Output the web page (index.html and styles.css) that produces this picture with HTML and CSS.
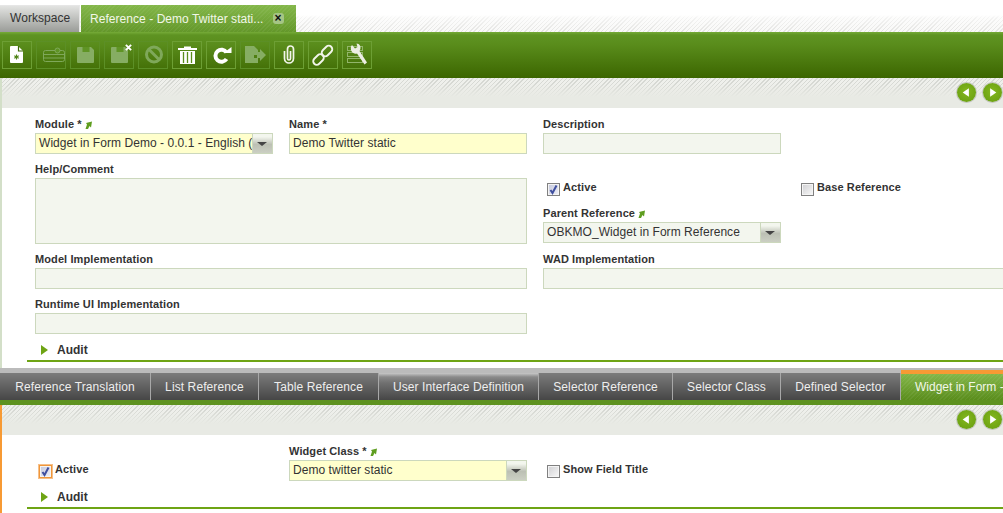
FILE: index.html
```html
<!DOCTYPE html>
<html lang="en">
<head>
<meta charset="utf-8">
<title>Reference - Demo Twitter static</title>
<link rel="stylesheet" href="styles.css">
</head>
<body>
<div class="app">
  <div class="top-tabs">
    <div class="top-tab workspace">Workspace</div>
    <div class="top-tab current">Reference - Demo Twitter stati...<span class="close">×</span></div>
  </div>
  <div class="toolbar">
    <div class="tbtn"><svg viewBox="0 0 30 28"><path d="M9 5h7l5 5v11a1 1 0 0 1-1 1H9a1 1 0 0 1-1-1V6a1 1 0 0 1 1-1z" fill="#fff"/><path d="M16.500 5v5h4.500" fill="none" stroke="#3f6a08" stroke-width="1.200"/><path d="M14.500 13.500v5M12.300 14.700l4.400 2.600M16.700 14.700l-4.400 2.600" stroke="#4f8416" stroke-width="1.100"/></svg></div>
    <div class="tbtn off"><svg viewBox="0 0 30 28"><rect x="7.500" y="9.500" width="21" height="11" rx="2" fill="none" stroke="#7fa85a"/><path d="M8 13.500h20M8 17h20" stroke="#7fa85a"/><circle cx="21.500" cy="9.500" r="2.500" fill="#5f9425" stroke="#7fa85a"/></svg></div>
    <div class="tbtn off"><svg viewBox="0 0 30 28"><path d="M8 6h13l3 3v12a1 1 0 0 1-1 1H8a1 1 0 0 1-1-1V7a1 1 0 0 1 1-1z" fill="#86ad63"/><rect x="12.500" y="6" width="7" height="5" fill="#5f9425"/></svg></div>
    <div class="tbtn off save-close"><svg viewBox="0 0 30 28"><path d="M8 6h13l3 3v12a1 1 0 0 1-1 1H8a1 1 0 0 1-1-1V7a1 1 0 0 1 1-1z" fill="#86ad63"/><rect x="12.500" y="6" width="7" height="5" fill="#5f9425"/></svg><svg class="mark" viewBox="0 0 8 8"><path d="M1 1l6 6M7 1L1 7" stroke="#fff" stroke-width="2.200"/></svg></div>
    <div class="tbtn off"><svg viewBox="0 0 30 28"><circle cx="16" cy="13.500" r="7.500" fill="none" stroke="#7fa85a" stroke-width="3"/><path d="M11 8.500l10 10" stroke="#7fa85a" stroke-width="3"/></svg></div>
    <div class="tbtn"><svg viewBox="0 0 30 28"><path d="M6 7h19v2H6zM12 5.500h7V7h-7z" fill="#fff"/><path d="M8 10h15v13H8z" fill="#fff"/><path d="M11.500 11v11M15.500 11v11M19.500 11v11" stroke="#5a8d1c" stroke-width="1.300"/></svg></div>
    <div class="tbtn"><svg viewBox="0 0 30 28"><path d="M20.500 11.500A6 6 0 1 0 20.500 18" fill="none" stroke="#fff" stroke-width="4"/><path d="M17.500 12h8V6z" fill="#fff"/></svg></div>
    <div class="tbtn off"><svg viewBox="0 0 30 28"><path d="M5 5h9l4 4v5h-4v3h4v5H5z" fill="#86ad63"/><path d="M17 11h3V8l6 6-6 6v-3h-3z" fill="#86ad63"/></svg></div>
    <div class="tbtn"><svg viewBox="0 0 30 28"><path d="M10.500 10v7.500a4.500 4.500 0 0 0 9 0V8a3 3 0 0 0-6 0v9.500a1.200 1.200 0 0 0 3 0V10" fill="none" stroke="#f2f5ea" stroke-width="1.700"/></svg></div>
    <div class="tbtn"><svg viewBox="0 0 30 28"><g fill="none" stroke="#f2f5ea" stroke-width="1.900"><rect x="4.500" y="15" width="12" height="7" rx="3.500" transform="rotate(-45 10.500 18.500)"/><rect x="13" y="6.500" width="12" height="7" rx="3.500" transform="rotate(-45 19 10)"/></g></svg></div>
    <div class="tbtn"><svg viewBox="0 0 30 28"><g fill="none" stroke="#92b56b"><rect x="5.500" y="5.500" width="15" height="4"/><rect x="5.500" y="11.500" width="15" height="4"/><rect x="5.500" y="17.500" width="15" height="4"/></g><path d="M10 4l3 3.500 2.500-1.500-1-3.500C17.500 2.500 20 6 17.500 10L25 21.500 22.500 23.500 15 12.500C11 13.500 8 10 9 5.500z" fill="#eceee4"/></svg></div>
  </div>
  <div class="window main-window">
    <div class="statusbar">
      <span class="nav"><svg viewBox="0 0 20 20"><path d="M12.500 5.500v9L6 10z" fill="#fff"/></svg></span>
      <span class="nav"><svg viewBox="0 0 20 20"><path d="M7.500 5.500v9L14 10z" fill="#fff"/></svg></span>
    </div>
    <div class="form">
      <div class="field"><label class="lbl">Module *<svg class="arrow" viewBox="0 0 7 8"><path d="M.5 8 2 3.500 1 2 7 .5 6 6.500 4.500 5 3 8z" fill="#5f9e20"/></svg></label><div class="input req combo"><span class="val">Widget in Form Demo - 0.0.1 - English (</span><span class="drop"></span></div></div>
      <div class="field"><label class="lbl">Name *</label><div class="input req"><span class="val">Demo Twitter static</span></div></div>
      <div class="field"><label class="lbl">Description</label><div class="input"></div></div>
      <div class="field"></div>
      <div class="field span2 tall"><label class="lbl">Help/Comment</label><div class="input area"></div></div>
      <div class="check-cell"><span class="cb on"><svg viewBox="0 0 11 11"><path d="M2.500 6l2 3L8.500 1.500" fill="none" stroke="#3f4f9f" stroke-width="2"/></svg></span><span class="lbl">Active</span></div>
      <div class="check-cell"><span class="cb"></span><span class="lbl">Base Reference</span></div>
      <div class="field parent"><label class="lbl">Parent Reference<svg class="arrow" viewBox="0 0 7 8"><path d="M.5 8 2 3.500 1 2 7 .5 6 6.500 4.500 5 3 8z" fill="#5f9e20"/></svg></label><div class="input combo"><span class="val">OBKMO_Widget in Form Reference</span><span class="drop"></span></div></div>
      <div class="field span2"><label class="lbl">Model Implementation</label><div class="input"></div></div>
      <div class="field span2"><label class="lbl">WAD Implementation</label><div class="input"></div></div>
      <div class="field span2"><label class="lbl">Runtime UI Implementation</label><div class="input"></div></div>
    </div>
    <div class="audit"><span class="tri"></span>Audit</div>
  </div>
  <div class="tabbar">
    <div class="tab">Reference Translation</div>
    <div class="tab">List Reference</div>
    <div class="tab">Table Reference</div>
    <div class="tab hover">User Interface Definition</div>
    <div class="tab">Selector Reference</div>
    <div class="tab">Selector Class</div>
    <div class="tab">Defined Selector</div>
    <div class="tab active">Widget in Form -</div>
  </div>
  <div class="window child-window">
    <div class="statusbar">
      <span class="nav"><svg viewBox="0 0 20 20"><path d="M12.500 5.500v9L6 10z" fill="#fff"/></svg></span>
      <span class="nav"><svg viewBox="0 0 20 20"><path d="M7.500 5.500v9L14 10z" fill="#fff"/></svg></span>
    </div>
    <div class="form">
      <div class="check-cell"><span class="cb on focus"><svg viewBox="0 0 11 11"><path d="M2.500 6l2 3L8.500 1.500" fill="none" stroke="#3f4f9f" stroke-width="2"/></svg></span><span class="lbl">Active</span></div>
      <div class="field"><label class="lbl">Widget Class *<svg class="arrow" viewBox="0 0 7 8"><path d="M.5 8 2 3.500 1 2 7 .5 6 6.500 4.500 5 3 8z" fill="#5f9e20"/></svg></label><div class="input req combo"><span class="val">Demo twitter static</span><span class="drop"></span></div></div>
      <div class="check-cell"><span class="cb"></span><span class="lbl">Show Field Title</span></div>
    </div>
    <div class="audit"><span class="tri"></span>Audit</div>
  </div>
</div>
</body>
</html>
```
FILE: styles.css
```css
* { box-sizing: border-box; }
html, body { margin: 0; padding: 0; background: #fff; overflow: hidden; }
body { font-family: "Liberation Sans", Arial, sans-serif; color: #333; }
.app { width: 1003px; height: 513px; overflow: hidden; }

.top-tabs {
  display: flex;
  height: 32px;
  padding-top: 5px;
  gap: 1px;
  background:
    linear-gradient(to bottom, #fff 15px, rgba(255,255,255,.6) 18px, rgba(255,255,255,.1) 32px),
    repeating-linear-gradient(135deg, #e2e2e0 0 1px, #f8f8f7 1px 3px);
}
.top-tab { height: 27px; line-height: 26px; font-size: 12px; letter-spacing: .05px; white-space: nowrap; }
.workspace {
  width: 80px; padding-left: 10px; color: #333;
  background: linear-gradient(to bottom, #e2e3e1, #9a9c98);
  border: 1px solid #e6e6e6; border-width: 1px 1px 0 0; line-height: 25px;
}
.current {
  width: 215px; padding-left: 9px; color: #f2f7e8;
  background:
    repeating-linear-gradient(135deg, rgba(255,255,255,.05) 0 1px, transparent 1px 3px),
    linear-gradient(to bottom, #84b74a, #64982a);
  display: flex; align-items: center;
}
.close {
  width: 11px; height: 11px; margin-left: 9px; border-radius: 3px;
  background: #a5c585; color: #111; font-size: 12px; font-weight: bold;
  line-height: 10px; text-align: center;
}

.toolbar {
  height: 46px;
  padding: 9px 0 0 2px;
  display: flex;
  gap: 4px;
  background: linear-gradient(to bottom, #76ab38 0, #5e9322 3px, #5a8d1c 12px, #3c6600 100%);
}
.tbtn {
  position: relative;
  width: 30px; height: 28px;
  border: 1px solid #6d9f34;
  flex: none;
}
.tbtn svg { position: absolute; left: -1px; top: -1px; width: 30px; height: 28px; }
.tbtn .mark { left: 20px; top: 2px; width: 7px; height: 7px; }
.tbtn.off { border-color: #5c8f26; }

.main-window { height: 290px; border-left: 2px solid #d3dfc8; }
.child-window { height: 108px; border-left: 2px solid #f79a34; }

.statusbar {
  height: 30px;
  display: flex;
  justify-content: flex-end;
  align-items: center;
  gap: 7px;
  padding: 0 1px 2px 0;
  background:
    linear-gradient(to bottom, rgba(232,234,228,0) 5px, #e8eae4 19px),
    repeating-linear-gradient(135deg, #d6d8d3 0 1px, #eff0ec 1px 3px);
}
.nav {
  width: 19px; height: 19px; border-radius: 50%;
  background: radial-gradient(circle at 50% 45%, #84b71e 0, #6ea414 70%, #5f8f12 100%);
  box-shadow: 0 0 0 1px #c2c6bd;
}
.nav svg { display: block; width: 19px; height: 19px; }

.form {
  display: grid;
  grid-template-columns: repeat(4, 238px);
  grid-auto-rows: 45px;
  column-gap: 16px;
  padding: 10px 0 0 33px;
}
.field { min-width: 0; }
.span2 { grid-column: span 2; }
.tall { grid-row: span 2; }
.parent { grid-column: 3; margin-top: -1px; }
.lbl {
  display: block;
  height: 15px;
  line-height: 13px;
  font-size: 11px;
  font-weight: bold;
  letter-spacing: .1px;
  color: #333;
  white-space: nowrap;
}
.arrow { display: inline-block; width: 7px; height: 8px; margin-left: 3px; vertical-align: -1px; }
.input {
  display: flex;
  height: 21px;
  background: #f3f6ee;
  border: 1px solid #ccd8bd;
  font-size: 12px;
  letter-spacing: .05px;
  line-height: 18px;
  color: #333;
  overflow: hidden;
}
.input.req { background: #ffffcc; }
.input.area { height: 66px; }
.val { flex: 1; min-width: 0; padding-left: 3px; white-space: nowrap; overflow: hidden; }
.drop {
  position: relative;
  width: 20px; flex: none;
  background: linear-gradient(to bottom, #f3f6ee 15%, #bcc0b4 55%, #cbcfc3 100%);
  border-left: 1px solid #ccd8bd;
}
.drop::after {
  content: "";
  position: absolute; left: 4px; top: 8px;
  border: 5px solid transparent; border-top: 4px solid #444; border-bottom: 0;
}
.check-cell { display: flex; align-items: flex-start; padding: 20px 0 0 4px; gap: 3px; }
.check-cell .lbl { margin-top: -2px; }
.cb {
  width: 13px; height: 13px; flex: none;
  border: 1px solid #808080;
  box-shadow: inset 0 0 0 1px #f4f4f4;
  background: linear-gradient(135deg, #cfcfd2, #f8f8f8);
}
.cb svg { display: block; width: 11px; height: 11px; }
.cb.on { background: linear-gradient(135deg, #c4c8dc, #f0f0f8); }
.cb.focus { border-color: #f0963a; outline: 1px solid rgba(240,150,58,.6); }

.audit {
  height: 19px;
  margin-left: 25px;
  padding: 0 0 4px 14px;
  border-bottom: 2px solid #6ea414;
  display: flex;
  align-items: center;
  gap: 9px;
  font-size: 12px;
  font-weight: bold;
  color: #333;
}
.tri { width: 0; height: 0; border: 5px solid transparent; border-left: 7px solid #6ea414; border-right: 0; }

.tabbar {
  height: 37px;
  display: grid;
  grid-template-columns: 151px 108px 120px 160px 134px 108px 120px 102px;
  padding-top: 5px;
  background: linear-gradient(to bottom, #bbb 0 5px, #5e9220 5px 100%);
  overflow: hidden;
}
.tab {
  height: 27px;
  text-align: center;
  line-height: 28px;
  font-size: 12px;
  letter-spacing: .1px;
  color: #eee;
  white-space: nowrap;
  border-right: 1px solid #a8a8a8;
  background: linear-gradient(to bottom, #7c7c7c, #464646);
}
.tab.hover { background: linear-gradient(to bottom, #c8c8c8 0, #8a8a8a 4px, #707070 10px, #464646 100%); }
.tab.active {
  margin-top: -3px;
  height: 30px;
  border-top: 4px solid #f79a34;
  border-right: 0;
  text-align: left;
  padding-left: 14px;
  letter-spacing: 0;
  background:
    repeating-linear-gradient(135deg, rgba(255,255,255,.06) 0 1px, transparent 1px 3px),
    linear-gradient(to bottom, #84b74a, #5a8d1c);
  color: #f2f7e8;
  line-height: 27px;
}
```
